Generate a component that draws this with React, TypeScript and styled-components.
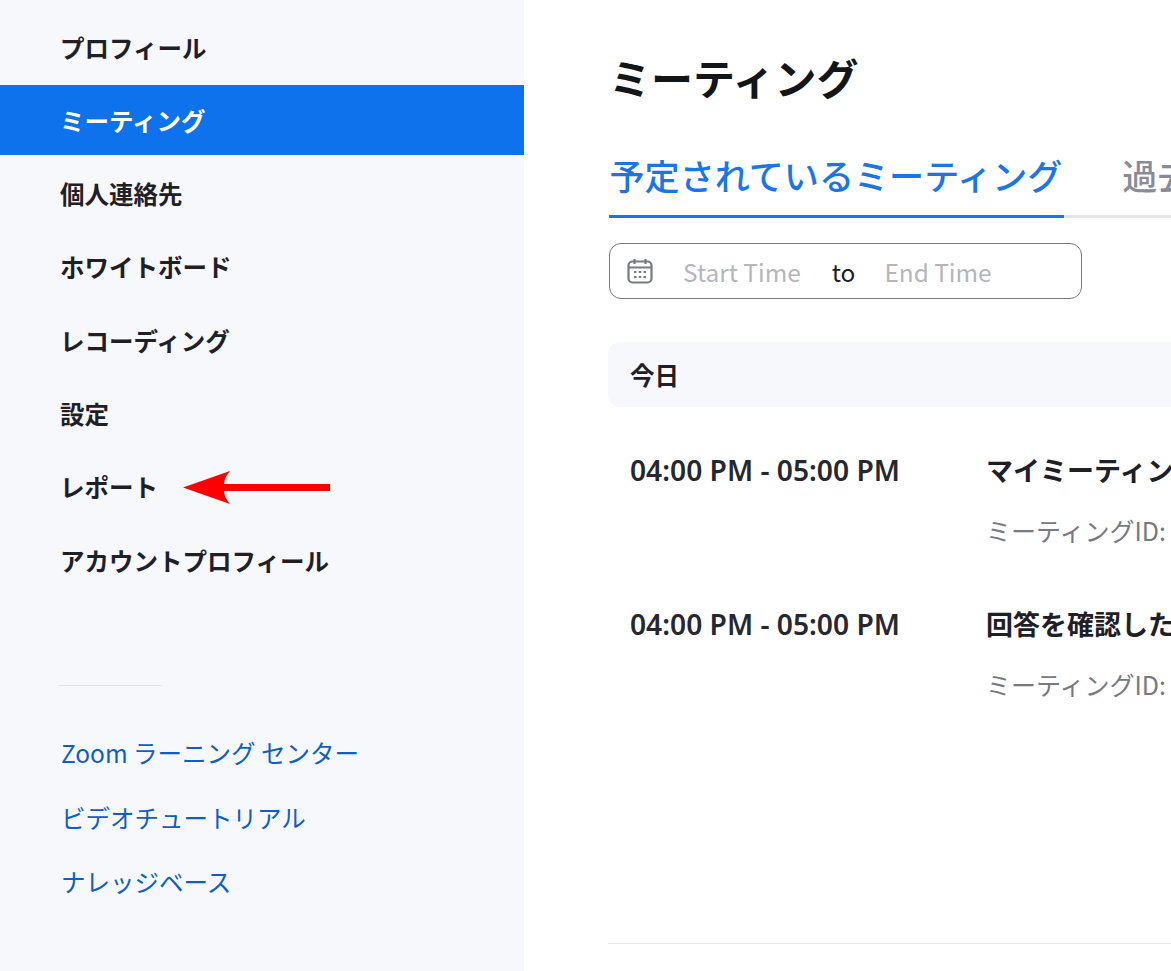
import React from "react";
import styled, { createGlobalStyle } from "styled-components";

const Global = createGlobalStyle`
  html, body { margin: 0; padding: 0; height: 100%; overflow: hidden; background: #fff; }
  body { font-family: "Noto Sans CJK JP", "Noto Sans", sans-serif; }
`;
const Page = styled.div`display: flex; width: 1171px; height: 971px; overflow: hidden;`;
const Side = styled.nav`width: 524px; flex: none; background: #f7f8fb; padding-top: 12px; box-sizing: border-box;`;
const NavItem = styled.div<{ $active?: boolean }>`
  height: 70px; margin-bottom: 3.3px; padding-left: 60px; display: flex; align-items: center;
  font-size: 24.5px; font-weight: 700;
  color: ${(p) => (p.$active ? "#fff" : "#1f2026")};
  background: ${(p) => (p.$active ? "#0e72ed" : "transparent")};
  position: relative;
`;
const Arrow = styled.svg`position: absolute; left: 183px; top: 17px;`;
const Divider = styled.div`width: 104px; height: 1px; background: #e4e5e9; margin: 90px 0 0 58px;`;
const Links = styled.div`display: flex; flex-direction: column; gap: 26.5px; padding: 48px 0 0 61px;`;
const HelpLink = styled.div`font-size: 24.5px; line-height: 38px; color: #0e5fc4; font-weight: 400;`;
const Main = styled.main`flex: 1; min-width: 0; padding: 47px 0 0 85px; overflow: hidden;`;
const Title = styled.h1`margin: 0; font-size: 42px; line-height: 60px; font-weight: 700; color: #131619;`;
const Tabs = styled.div`display: flex; width: 640px; margin-top: 39px; margin-left: -0.5px; border-bottom: 3px solid #e6e6e9; white-space: nowrap; gap: 57px;`;
const Tab = styled.div<{ $active?: boolean }>`
  font-size: 35.1px; line-height: 58px; height: 58px; margin-bottom: -3px; padding: 0 2px 11px 1px; font-weight: 500;
  color: ${(p) => (p.$active ? "#1a76e8" : "#8a8a99")};
  border-bottom: ${(p) => (p.$active ? "3px solid #1a76e8" : "none")};
`;
const DateBox = styled.div`
  display: flex; align-items: center; width: 473px; height: 56px; box-sizing: border-box;
  margin-top: 25px; border: 1.5px solid #777a80; border-radius: 12px; padding-left: 17px; font-size: 24.4px;
`;
const CalendarIcon = styled.svg`flex: none; margin-right: 30px;`;
const Placeholder = styled.span`color: #b4b6bc;`;
const To = styled.span`color: #1f2026; margin: 0 29px 0 31px;`;
const Day = styled.div`
  margin: 43px 0 0 -1px; width: 640px; height: 65px; background: #f7f8fb; border-radius: 12px;
  display: flex; align-items: center; padding-left: 22px; font-size: 24.5px; font-weight: 700; color: #1f2026;
`;
const Row = styled.div`display: flex; margin-left: -1px; padding-left: 22px; white-space: nowrap; height: 154px;`;
const Time = styled.div`width: 356px; flex: none; font-size: 28.2px; line-height: 38px; font-weight: 600; color: #26282e; font-family: "Noto Sans", sans-serif;`;
const Info = styled.div`display: flex; flex-direction: column; gap: 22px;`;
const Name = styled.div`font-size: 27px; line-height: 38px; font-weight: 700; color: #1f2026;`;
const Meta = styled.div`font-size: 25px; line-height: 38px; color: #777a80;`;
const Rows = styled.div`padding-top: 44px;`;
const Bottom = styled.div`width: 640px; height: 1px; margin-left: -1px; background: #e4e5e9; margin-top: 184px;`;

const nav = ["プロフィール","ミーティング","個人連絡先","ホワイトボード","レコーディング","設定","レポート","アカウントプロフィール"];

export default function App() {
  return (
    <Page>
      <Global />
      <Side>
        {nav.map((n, i) => (
          <NavItem key={n} $active={i === 1}>
            {n}
            {i === 6 && (
              <Arrow width="150" height="38" viewBox="0 0 150 38">
                <path d="M0 18.5 L47 2 Q41 9 41 15 H147 V22 H41 Q41 28 47 35 Z" fill="#f00" />
              </Arrow>
            )}
          </NavItem>
        ))}
        <Divider />
        <Links>
          <HelpLink>Zoom ラーニング センター</HelpLink>
          <HelpLink>ビデオチュートリアル</HelpLink>
          <HelpLink>ナレッジベース</HelpLink>
        </Links>
      </Side>
      <Main>
        <Title>ミーティング</Title>
        <Tabs>
          <Tab $active>予定されているミーティング</Tab>
          <Tab>過去のミーティング</Tab>
        </Tabs>
        <DateBox>
          <CalendarIcon width="26" height="26" viewBox="0 0 26 26" fill="none" stroke="#777a80" strokeWidth="2.2">
            <rect x="1.5" y="3.5" width="23" height="21" rx="4" />
            <path d="M1.5 9.5h23M7.5 1v5M18.5 1v5M7 14h2.4M11.8 14h2.4M16.6 14h2.4M7 19h2.4M11.8 19h2.4M16.6 19h2.4" />
          </CalendarIcon>
          <Placeholder>Start Time</Placeholder>
          <To>to</To>
          <Placeholder>End Time</Placeholder>
        </DateBox>
        <Day>今日</Day>
        <Rows>
          <Row>
            <Time>04:00 PM - 05:00 PM</Time>
            <Info><Name>マイミーティング</Name><Meta>ミーティングID: 000 0000 0000</Meta></Info>
          </Row>
          <Row>
            <Time>04:00 PM - 05:00 PM</Time>
            <Info><Name>回答を確認したい</Name><Meta>ミーティングID: 000 0000 0000</Meta></Info>
          </Row>
        </Rows>
        <Bottom />
      </Main>
    </Page>
  );
}
